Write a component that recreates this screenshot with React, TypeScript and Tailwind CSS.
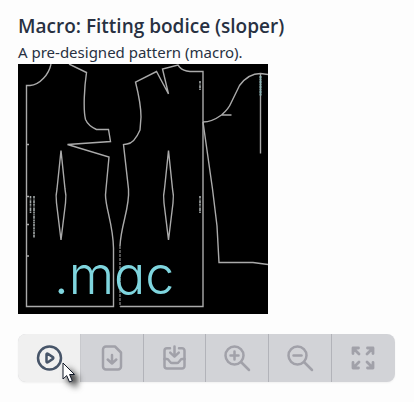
import type { ReactNode } from "react";

function Icon({ children, width = 2.5 }: { children: ReactNode; width?: number }) {
  return (
    <svg
      viewBox="0 0 28 28"
      className="size-7"
      fill="none"
      stroke="currentColor"
      strokeWidth={width}
      strokeLinecap="round"
      strokeLinejoin="round"
      aria-hidden="true"
    >
      {children}
    </svg>
  );
}

function PatternDrawing() {
  return (
    <svg viewBox="0 0 250 250" className="block w-full" fill="none" stroke="#aaaaaa" strokeWidth="1.4" aria-hidden="true">
      {/* back */}
      <path d="M33 0C31 10 22 21 12 21.500H8.500V242.500H95.500V184C95 160 87.500 144 87.500 131L88 125L91 93L49.500 80.500L92.500 77.500L90.500 65.500H78.500C73 63 69 59 67.500 55.500C65 45 66.500 22 68.500 8.500L51 0" />
      <path d="M43 86.500L39 125Q37.500 131 38.500 139L43 176L47.500 139Q48.500 131 47 125Z" />
      <path d="M8.500 80.500H11M8.500 132.500H11M8.500 160.500H11M8.500 192H11" />
      {/* front */}
      <path d="M102 242.500H185V7.500H172Q165 7 161.500 3L160 1L144.500 5L150.500 30L138.500 7.500L117.500 18C121 32 123 44 123 53L122 66C119 73 115 79.500 109 80L105.500 80.500L110.500 125C112 144 103 160 102 182" />
      <path d="M102 182V242.500" strokeDasharray="3 1" stroke="#777" />
      <path d="M150.500 86.500L146.500 125Q145 131 146 139L150.500 176L155 139Q156 131 154.500 125Z" />
      {/* sleeve */}
      <path d="M185 58C192 58 198 55 203.500 51C207 48 211 44 213 39L221.500 21.500C227 14 235 9.500 242.500 9.500L250 10.500M203.500 51H213.500M242.500 9.500V89.500" />
      <path d="M185 58L194.500 125L199 162L201 198.500H235L250 200.500" />
      {/* grain marks */}
      <path d="M182 17V26M182 132V149M12.500 132V149M16 132V174" stroke="#a2a8a8" strokeWidth="1.600" strokeDasharray="2 .6 1 .6 3 .6" />
      <path d="M242.500 12V32" stroke="#8db8ba" strokeWidth="2" strokeDasharray="2 .5" />
    </svg>
  );
}

const glass = (
  <>
    <circle cx="11.5" cy="11.5" r="9" />
    <path d="M18 18L26 26" />
  </>
);

const tools = [
  {
    label: "Run macro",
    icon: (
      <Icon>
        <circle cx="14.5" cy="14" r="11.5" />
        <path d="M11.500 10.500C11.500 9.700 12.200 9.400 12.900 9.800L17.800 13.100C18.500 13.600 18.500 14.400 17.800 14.900L12.900 18.200C12.200 18.600 11.500 18.300 11.500 17.500Z" />
      </Icon>
    ),
  },
  {
    label: "Download file",
    icon: (
      <Icon>
        <path d="M17 2.500H8A3 3 0 0 0 5 5.500V22.500A3 3 0 0 0 8 25.500H20A3 3 0 0 0 23 22.500V8.500Z" />
        <path d="M14 11V19.500M9.700 15.500L14 19.500L18.300 15.500" />
      </Icon>
    ),
  },
  {
    label: "Save to library",
    icon: (
      <Icon>
        <path d="M9 4.200H6A2.500 2.500 0 0 0 3.500 6.700V22A2.500 2.500 0 0 0 6 24.500H21A2.500 2.500 0 0 0 23.500 22V6.700A2.500 2.500 0 0 0 21 4.200H18" />
        <path d="M3.500 15H6C8 15 8.500 19 11 19H16C18.500 19 19 15 21 15H23.500" />
        <path d="M13.500 2.500V12.500M9.200 8.700L13.500 12.700L17.800 8.700" />
      </Icon>
    ),
  },
  {
    label: "Zoom in",
    icon: (
      <Icon>
        {glass}
        <path d="M7.500 11.500H15.500M11.500 7.500V15.500" />
      </Icon>
    ),
  },
  {
    label: "Zoom out",
    icon: (
      <Icon>
        {glass}
        <path d="M7.500 11.500H15.500" />
      </Icon>
    ),
  },
  {
    label: "Fit to window",
    icon: (
      <Icon width={2.8}>
        <path d="M4 9.500V4H9.500M4 4L10 10M18.500 4H24V9.500M24 4L18 10M4 18.500V24H9.500M4 24L10 18M18.500 24H24V18.500M24 24L18 18" />
      </Icon>
    ),
  },
];

function Toolbar() {
  return (
    <div className="grid h-12 grid-cols-6 overflow-hidden rounded-lg bg-[#d2d3d7] shadow-xs">
      {tools.map((tool, i) => (
        <button
          key={tool.label}
          type="button"
          aria-label={tool.label}
          disabled={i > 0}
          className={
            i === 0
              ? "flex items-center justify-center border-r border-[#c8c9cd] bg-[#f0f0f0] text-[#475569]"
              : "flex items-center justify-center border-r border-[#b2b3b9] text-[#a1a1a9] last:border-transparent"
          }
        >
          {tool.icon}
        </button>
      ))}
    </div>
  );
}

export default function App() {
  return (
    <main className="bg-[#fdfdfd] pt-3 pr-[19px] pb-5 pl-[18px] font-['Noto_Sans','Open_Sans',sans-serif] text-[#283142]">
      <h1 className="font-['Open_Sans','Noto_Sans',sans-serif] text-[19px] leading-7 font-semibold">
        Macro: Fitting bodice (sloper)
      </h1>
      <p className="text-[15px] leading-6">A pre-designed pattern (macro).</p>
      <figure className="relative w-[250px] max-w-full bg-black">
        <PatternDrawing />
        <figcaption className="absolute bottom-3 left-9 font-['Inter',sans-serif] text-[52px] leading-none font-light text-[#7fd5de] [font-feature-settings:'cv11']">
          .mac
        </figcaption>
      </figure>
      <div className="relative mt-5">
        <Toolbar />
        <svg
          viewBox="0 0 14 22"
          className="absolute top-7 left-11 h-[22px] w-[14px] drop-shadow-[5px_5px_3px_rgba(0,0,0,0.8)]"
          aria-hidden="true"
        >
          <path d="M1 1V17L4.700 13.600L7.500 20L10.300 18.800L7.600 12.500H12.500Z" fill="#fff" stroke="#111827" strokeWidth="1" />
        </svg>
      </div>
    </main>
  );
}
